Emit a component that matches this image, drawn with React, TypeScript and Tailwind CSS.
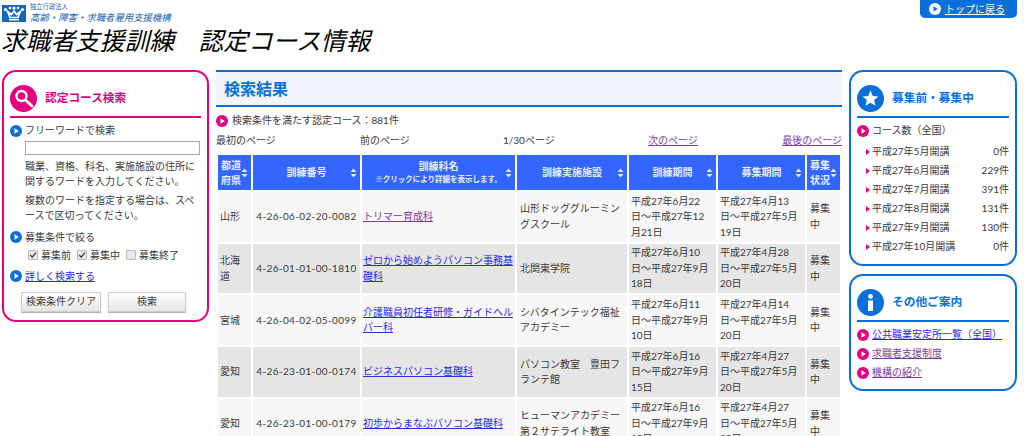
import { ReactNode } from "react";

interface Course {
  pref: string;
  no: string;
  name: string;
  visited?: boolean;
  school: string;
  period: string;
  recruit: string;
}

const courses: Course[] = [
  { pref: "山形", no: "4-26-06-02-20-0082", name: "トリマー育成科", visited: true, school: "山形ドッググルーミングスクール", period: "平成27年6月22日～平成27年12月21日", recruit: "平成27年4月13日～平成27年5月19日" },
  { pref: "北海道", no: "4-26-01-01-00-1810", name: "ゼロから始めようパソコン事務基礎科", school: "北関東学院", period: "平成27年6月10日～平成27年9月18日", recruit: "平成27年4月28日～平成27年5月20日" },
  { pref: "宮城", no: "4-26-04-02-05-0099", name: "介護職員初任者研修・ガイドヘルパー科", school: "シバタインテック福祉アカデミー", period: "平成27年6月11日～平成27年9月10日", recruit: "平成27年4月14日～平成27年5月20日" },
  { pref: "愛知", no: "4-26-23-01-00-0174", name: "ビジネスパソコン基礎科", school: "パソコン教室　豊田フランテ館", period: "平成27年6月16日～平成27年9月15日", recruit: "平成27年4月27日～平成27年5月20日" },
  { pref: "愛知", no: "4-26-23-01-00-0179", name: "初歩からまなぶパソコン基礎科", school: "ヒューマンアカデミー第２サテライト教室", period: "平成27年6月16日～平成27年9月15日", recruit: "平成27年4月27日～平成27年5月20日" },
];

const counts = [
  ["平成27年5月開講", "0件"],
  ["平成27年6月開講", "229件"],
  ["平成27年7月開講", "391件"],
  ["平成27年8月開講", "131件"],
  ["平成27年9月開講", "130件"],
  ["平成27年10月開講", "0件"],
];

const Bullet = ({ color = "#0a6fdc", arrow = "#fff" }: { color?: string; arrow?: string }) => (
  <svg width="12" height="12" viewBox="0 0 12 12" className="shrink-0">
    <circle cx="6" cy="6" r="6" fill={color} />
    <path d="M4.5 3.2 L8.8 6 L4.5 8.8 Z" fill={arrow} />
  </svg>
);

const SortArrows = () => (
  <svg width="7" height="10" viewBox="0 0 7 10" className="absolute right-[3px] top-1/2 -translate-y-1/2">
    <path d="M3.5 0.5 L6.5 4 H0.5 Z M3.5 9.5 L6.5 6 H0.5 Z" fill="#dfe8ff" />
  </svg>
);

const Th = ({ children }: { children: ReactNode }) => (
  <th className="relative bg-[#3366ff] px-[3px] text-center align-middle text-[10px] font-bold leading-[15px] text-[#e8eeff]">
    {children}
    <SortArrows />
  </th>
);

const Check = ({ checked, label }: { checked?: boolean; label: string }) => (
  <label className="flex items-center gap-[3px]">
    <span className="relative flex h-[10px] w-[10px]">
      <input
        type="checkbox"
        defaultChecked={checked}
        className="m-0 h-[10px] w-[10px] appearance-none rounded-[1px] border border-[#bbb] bg-[#e8e8e8]"
      />
      {checked && (
        <svg width="10" height="10" viewBox="0 0 10 10" className="absolute left-0 top-0">
          <path d="M2.2 5 L4.2 7.2 L8 2.6" fill="none" stroke="#444" strokeWidth="1.4" />
        </svg>
      )}
    </span>
    {label}
  </label>
);

const CourseRow = ({ course, odd }: { course: Course; odd: boolean }) => {
  const bg = odd ? "bg-[#f7f7f7]" : "bg-[#e5e5e5]";
  const td = `${bg} align-middle leading-[15.4px]`;
  return (
    <tr className="h-[49.7px]">
      <td className={`${td} px-[2px]`}>{course.pref}</td>
      <td className={`${td} whitespace-nowrap text-center tracking-[0.35px]`}>{course.no}</td>
      <td className={`${td} pl-[1px]`}>
        <a href="#" className={`underline ${course.visited ? "text-[#7b3fa0]" : "text-[#2a2ae8]"}`}>
          {course.name}
        </a>
      </td>
      <td className={`${td} px-[3px]`}>{course.school}</td>
      <td className={`${td} pl-[2px] pr-[7px]`}>{course.period}</td>
      <td className={`${td} pl-[2px] pr-[7px]`}>{course.recruit}</td>
      <td className={`${td} pl-[3px] pr-[6px]`}>募集中</td>
    </tr>
  );
};

export default function App() {
  return (
    <div
      className="h-[436px] w-[1024px] overflow-hidden bg-white text-[10px] text-[#3a3a3a]"
      style={{ fontFamily: 'Lato, "Noto Sans CJK JP", sans-serif' }}
    >
      {/* Header */}
      <div className="flex h-[70px] justify-between">
        <div className="pl-[2px] pt-[5px]">
          <div className="flex h-[17px] items-start gap-[4px]">
            <svg width="24" height="17" viewBox="0 0 24 17">
              <rect width="24" height="17" fill="#1467b8" />
              <path d="M5.5 6.5 L8 12.5 H16 L18.5 6.5 L14.5 9.5 L12 6 L9.5 9.5 Z" fill="none" stroke="#fff" strokeWidth="1.6" />
              <circle cx="3.5" cy="4.5" r="1.6" fill="#fff" />
              <circle cx="8" cy="3" r="1.3" fill="#fff" />
              <circle cx="12" cy="3" r="1.6" fill="#fff" />
              <circle cx="16" cy="3" r="1.3" fill="#fff" />
              <circle cx="20.5" cy="4.5" r="1.6" fill="#fff" />
              <rect x="7" y="14" width="10" height="1.5" fill="#fff" />
            </svg>
            <div className="-mt-[3px] text-[#1a5fb0]">
              <div className="text-[6.3px] leading-[10px]">独立行政法人</div>
              <div className="whitespace-nowrap text-[9.4px] italic leading-[11px]">高齢・障害・求職者雇用支援機構</div>
            </div>
          </div>
          <h1 className="mt-[1px] -ml-px whitespace-nowrap text-[24.7px] font-normal italic leading-[36px] text-black">
            求職者支援訓練　認定コース情報
          </h1>
        </div>
        <div className="mr-[7px] flex h-[18px] w-[97px] items-center gap-[4px] rounded-b-[5px] bg-[#0a6fdc] pl-[9px]">
          <Bullet color="#fff" arrow="#0a6fdc" />
          <a href="#" className="text-[10px] leading-none text-white underline">トップに戻る</a>
        </div>
      </div>

      <div className="flex items-start">
        {/* Search panel */}
        <aside className="ml-[2px] h-[252px] w-[207px] rounded-[14px] border-2 border-[#e4007f] px-[6px] pt-[13px]">
          <div className="flex h-[33px] items-start gap-[8px] border-b-2 border-[#e4007f]">
            <svg width="27" height="27" viewBox="0 0 27 27" className="shrink-0">
              <circle cx="13.5" cy="13.5" r="13.5" fill="#e4007f" />
              <circle cx="11.5" cy="11" r="5" fill="none" stroke="#fff" strokeWidth="2.4" />
              <path d="M15.5 15 L22 21" stroke="#fff" strokeWidth="3" strokeLinecap="round" />
            </svg>
            <h2 className="pt-[4px] text-[11.7px] font-bold leading-[16px] text-[#e4007f]">認定コース検索</h2>
          </div>
          <div className="mt-[5px] flex items-center gap-[3px] leading-[15px]">
            <Bullet />
            フリーワードで検索
          </div>
          <input className="ml-[15px] mt-[3px] block h-[14px] w-[175px] border border-[#aaa] bg-white" />
          <p className="ml-[15px] mt-[4px] leading-[15.4px]">職業、資格、科名、実施施設の住所に関するワードを入力してください。</p>
          <p className="ml-[15px] mt-[3px] leading-[15.4px]">複数のワードを指定する場合は、スペースで区切ってください。</p>
          <div className="mt-[6px] flex items-center gap-[3px] leading-[15px]">
            <Bullet />
            募集条件で絞る
          </div>
          <div className="ml-[18px] mt-[3px] flex h-[15px] items-center gap-[6px]">
            <Check checked label="募集前" />
            <Check checked label="募集中" />
            <Check label="募集終了" />
          </div>
          <div className="mt-[6px] flex items-center gap-[3px] leading-[15px]">
            <Bullet />
            <a href="#" className="text-[#2a2ae8] underline">詳しく検索する</a>
          </div>
          <div className="ml-[11px] mt-[8px] flex gap-[7px]">
            <button className="h-[20px] w-[80px] rounded-[1px] border border-[#ccc] bg-gradient-to-b from-white to-[#e6e6e6] text-[10px] shadow-[0_1px_1px_#aaa]">検索条件クリア</button>
            <button className="h-[20px] w-[78px] rounded-[1px] border border-[#ccc] bg-gradient-to-b from-white to-[#e6e6e6] text-[10px] shadow-[0_1px_1px_#aaa]">検索</button>
          </div>
        </aside>

        {/* Results */}
        <main className="ml-[7px] w-[626px]">
          <div className="flex h-[37px] items-center border-y-2 border-[#0a6fdc] bg-[#f2f6fc] pl-[8px]">
            <h2 className="text-[16px] font-bold text-[#0a6fdc]">検索結果</h2>
          </div>
          <div className="mt-[6px] flex h-[15px] items-center gap-[4px]">
            <Bullet color="#e4007f" />
            検索条件を満たす認定コース：881件
          </div>
          <div className="mt-[5px] flex h-[15px] items-center">
            <span className="w-[144px]">最初のページ</span>
            <span className="w-[143px]">前のページ</span>
            <span className="w-[145px]">1/30ページ</span>
            <a href="#" className="w-[100px] text-[#7b3fa0] underline">次のページ</a>
            <a href="#" className="flex-1 text-right text-[#7b3fa0] underline">最後のページ</a>
          </div>
          <table className="mt-[5px] w-[626px] table-fixed border-separate border-spacing-[2px]">
            <colgroup>
              <col className="w-[33px]" />
              <col className="w-[107px]" />
              <col className="w-[153px]" />
              <col className="w-[110px]" />
              <col className="w-[87px]" />
              <col className="w-[87px]" />
              <col className="w-[33px]" />
            </colgroup>
            <thead>
              <tr className="h-[35px]">
                <Th><div className="pr-[7px] text-left">都道府県</div></Th>
                <Th>訓練番号</Th>
                <Th>
                  訓練科名
                  <div className="text-[7.5px] leading-[12px]">※クリックにより詳細を表示します。</div>
                </Th>
                <Th>訓練実施施設</Th>
                <Th>訓練期間</Th>
                <Th>募集期間</Th>
                <Th><div className="pr-[7px] text-left">募集状況</div></Th>
              </tr>
            </thead>
            <tbody>
              {courses.map((course, i) => (
                <CourseRow key={course.no} course={course} odd={i % 2 === 0} />
              ))}
            </tbody>
          </table>
        </main>

        {/* Right column */}
        <div className="ml-[7px] flex w-[168px] flex-col gap-[8px]">
          <section className="h-[196px] rounded-[14px] border-2 border-[#0a6fdc] px-[6px] pt-[13px]">
            <div className="flex h-[33px] items-start gap-[8px] border-b-2 border-[#0a6fdc]">
              <svg width="27" height="27" viewBox="0 0 27 27" className="shrink-0">
                <circle cx="13.5" cy="13.5" r="13.5" fill="#0a6fdc" />
                <path d="M13.5 5.5 L15.8 11 L21.5 11.4 L17.1 15.1 L18.5 20.8 L13.5 17.7 L8.5 20.8 L9.9 15.1 L5.5 11.4 L11.2 11 Z" fill="#fff" />
              </svg>
              <h2 className="pt-[4px] text-[11.7px] font-bold leading-[16px] text-[#0a6fdc]">募集前・募集中</h2>
            </div>
            <div className="mt-[3px] flex h-[19px] items-center gap-[3px]">
              <Bullet color="#e4007f" />
              コース数（全国）
            </div>
            <ul className="mt-[2px]">
              {counts.map(([label, count]) => (
                <li key={label} className="flex h-[19px] items-center pl-[9px]">
                  <span className="mr-[2px] border-y-[3px] border-l-[4px] border-y-transparent border-l-[#e4007f]" />
                  <span className="flex-1">{label}</span>
                  <span>{count}</span>
                </li>
              ))}
            </ul>
          </section>
          <section className="h-[117px] rounded-[14px] border-2 border-[#0a6fdc] px-[6px] pt-[13px]">
            <div className="flex h-[33px] items-start gap-[8px] border-b-2 border-[#0a6fdc]">
              <svg width="27" height="27" viewBox="0 0 27 27" className="shrink-0">
                <circle cx="13.5" cy="13.5" r="13.5" fill="#0a6fdc" />
                <circle cx="13.5" cy="7.5" r="2.4" fill="#fff" />
                <rect x="11" y="11.5" width="5" height="10.5" fill="#fff" />
              </svg>
              <h2 className="pt-[4px] text-[11.7px] font-bold leading-[16px] text-[#0a6fdc]">その他ご案内</h2>
            </div>
            <div className="mt-[3px] flex h-[19px] items-center gap-[3px]">
              <Bullet color="#e4007f" />
              <a href="#" className="text-[#2a2ae8] underline">公共職業安定所一覧（全国）</a>
            </div>
            <div className="flex h-[19px] items-center gap-[3px]">
              <Bullet color="#e4007f" />
              <a href="#" className="text-[#7b3fa0] underline">求職者支援制度</a>
            </div>
            <div className="flex h-[19px] items-center gap-[3px]">
              <Bullet color="#e4007f" />
              <a href="#" className="text-[#7b3fa0] underline">機構の紹介</a>
            </div>
          </section>
        </div>
      </div>
    </div>
  );
}
